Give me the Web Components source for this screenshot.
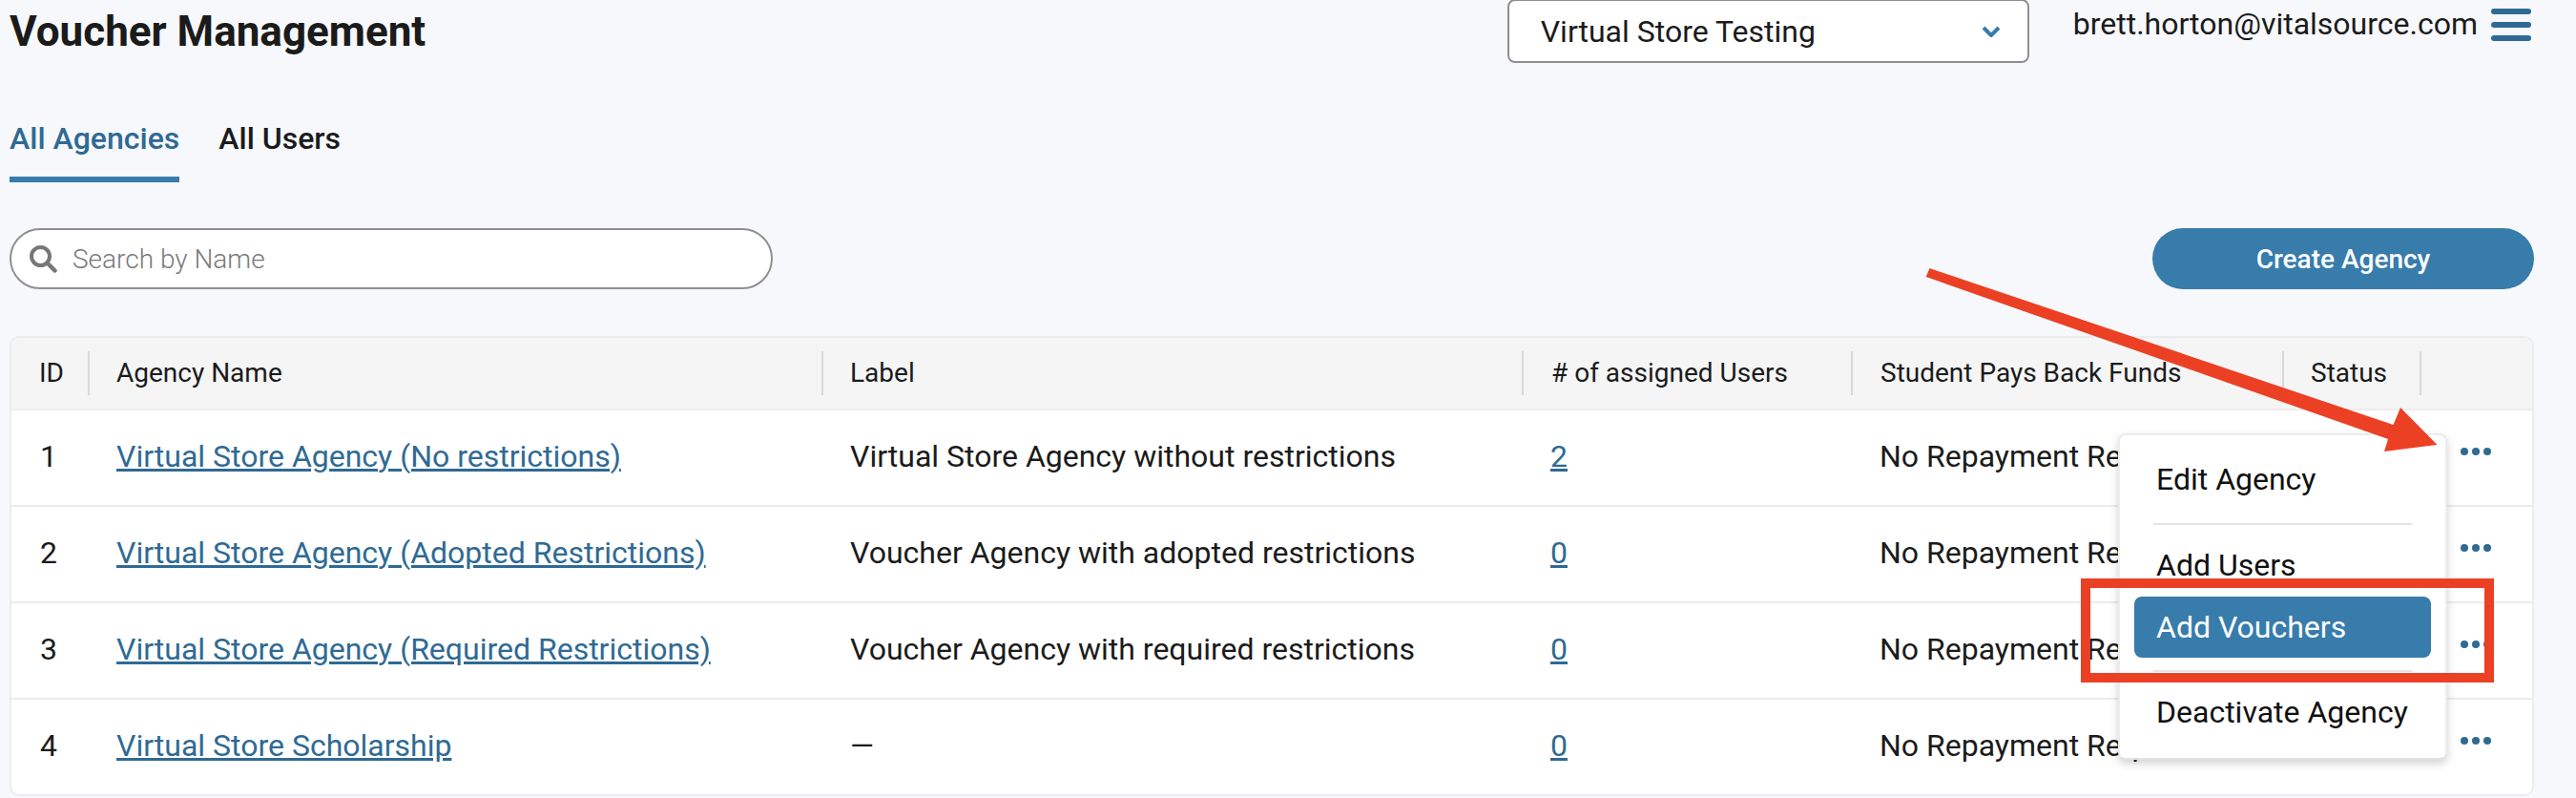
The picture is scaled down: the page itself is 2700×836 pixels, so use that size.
<!DOCTYPE html>
<html lang="en">
<head>
<meta charset="utf-8">
<title>Voucher Management</title>
<style>
    html, body { margin: 0; padding: 0; height: 100%; overflow: hidden; }
    body { background: #f7f8fc; color: #1b1b1b; font-family: Roboto, "Liberation Sans", sans-serif; }
</style>
</head>
<body>
<voucher-page>
    <page-header slot="header" heading="Voucher Management" store="Virtual Store Testing" email="brett.horton@vitalsource.com"></page-header>
    <tab-bar slot="tabs"></tab-bar>
    <tool-bar slot="tools"></tool-bar>
    <agency-table slot="table">
        <agency-row num="1" name="Virtual Store Agency (No restrictions)" label="Virtual Store Agency without restrictions" users="2"></agency-row>
        <agency-row num="2" name="Virtual Store Agency (Adopted Restrictions)" label="Voucher Agency with adopted restrictions" users="0"></agency-row>
        <agency-row num="3" name="Virtual Store Agency (Required Restrictions)" label="Voucher Agency with required restrictions" users="0"></agency-row>
        <agency-row num="4" name="Virtual Store Scholarship" label="—" users="0"></agency-row>
    </agency-table>
    <action-menu slot="overlay"></action-menu>
    <red-callout slot="overlay"></red-callout>
</voucher-page>

<script>
// page shell
class VoucherPage extends HTMLElement {
    constructor() {
        super();
        this.attachShadow({mode: 'open'});
        this.shadowRoot.innerHTML = `
            <style>
                :host { display: block; position: relative; width: 2700px; height: 836px; overflow: hidden; }
                .main { padding: 0 44px 0 10px; display: flex; flex-direction: column; }
            </style>
            <div class="main">
                <slot name="header"></slot>
                <slot name="tabs"></slot>
                <slot name="tools"></slot>
                <slot name="table"></slot>
            </div>
            <slot name="overlay"></slot>
        `;
    }
}
customElements.define('voucher-page', VoucherPage);

class PageHeader extends HTMLElement {
    constructor() {
        super();
        this.attachShadow({mode: 'open'});
    }
    connectedCallback() {
        const heading = this.getAttribute('heading');
        const store = this.getAttribute('store');
        const email = this.getAttribute('email');
        this.shadowRoot.innerHTML = `
            <style>
                :host { display: flex; align-items: flex-start; height: 66px; padding-right: 3px; }
                h1 { margin: 0; font-size: 44px; line-height: 66px; font-weight: 700; color: #1b1b1b; flex: 1; }
                .select {
                    box-sizing: border-box; width: 547px; height: 67px; margin-top: -1px; margin-right: 46px;
                    background: #fff; border: 2px solid #8f8f8f; border-radius: 8px;
                    display: flex; align-items: center; justify-content: space-between;
                    padding: 0 28px 0 33px; font-size: 32px; color: #1b1b1b;
                }
                .user { display: flex; gap: 14px; align-items: flex-start; }
                .email { font-size: 32px; line-height: 50px; color: #1b1b1b; }
                .burger { width: 42px; padding-top: 9px; display: flex; flex-direction: column; gap: 8px; }
                .burger i { display: block; height: 6px; background: #2f6a94; border-radius: 3px; }
            </style>
            <h1>${heading}</h1>
            <div class="select">
                <span>${store}</span>
                <svg width="20" height="12" viewBox="0 0 20 12"><path d="M2 2l8 8 8-8" fill="none" stroke="#387cab" stroke-width="4"/></svg>
            </div>
            <div class="user">
                <span class="email">${email}</span>
                <div class="burger"><i></i><i></i><i></i></div>
            </div>
        `;
    }
}
customElements.define('page-header', PageHeader);

class TabBar extends HTMLElement {
    constructor() {
        super();
        this.attachShadow({mode: 'open'});
        this.shadowRoot.innerHTML = `
            <style>
                :host { display: flex; gap: 41px; margin-top: 48px; height: 77px; font-size: 32px; font-weight: 500; }
                div { padding-top: 7px; height: 64px; line-height: 48px; white-space: nowrap; }
                .on { color: #2f6a94; border-bottom: 6px solid #387cab; }
            </style>
            <div class="on">All Agencies</div>
            <div>All Users</div>
        `;
    }
}
customElements.define('tab-bar', TabBar);

class ToolBar extends HTMLElement {
    constructor() {
        super();
        this.attachShadow({mode: 'open'});
        this.shadowRoot.innerHTML = `
            <style>
                :host { display: flex; justify-content: space-between; margin-top: 48px; height: 64px; }
                .search {
                    box-sizing: border-box; width: 800px; border: 2px solid #8f8f8f; border-radius: 32px; background: #fff;
                    display: flex; align-items: center; gap: 16px; padding-left: 18px;
                    font-size: 28px; color: #7a7a7a; font-weight: 300;
                }
                .btn {
                    width: 400px; border-radius: 32px; background: #387cab; color: #fff;
                    display: flex; align-items: center; justify-content: center;
                    font-size: 28px; font-weight: 500;
                }
            </style>
            <div class="search">
                <svg width="30" height="30" viewBox="0 0 30 30"><circle cx="12.5" cy="12.5" r="9.5" fill="none" stroke="#777" stroke-width="4"/><path d="M19.5 19.5l8 8" stroke="#777" stroke-width="4.5" stroke-linecap="round"/></svg>
                <span>Search by Name</span>
            </div>
            <div class="btn">Create Agency</div>
        `;
    }
}
customElements.define('tool-bar', ToolBar);

const COLS = '80px 769px 734px 345px 452px 144px 1fr';

class AgencyTable extends HTMLElement {
    constructor() {
        super();
        this.attachShadow({mode: 'open'});
        this.shadowRoot.innerHTML = `
            <style>
                :host { display: block; margin-top: 49px; background: #fff; border: 2px solid #ececec; border-radius: 10px; overflow: hidden; box-sizing: border-box; width: 2646px; }
                .head { display: grid; grid-template-columns: ${COLS}; height: 74px; align-items: center; background: #f5f5f5; font-size: 28px; color: #1b1b1b; }
                .head div { height: 46px; line-height: 46px; padding-left: 28px; border-left: 2px solid #d9d9d9; box-sizing: border-box; white-space: nowrap; }
                .head div:first-child { border-left: 0; padding-left: 29px; }
                .head div:nth-child(n+4):nth-child(-n+5) { padding-left: 29px; }
            </style>
            <div class="head">
                <div>ID</div><div>Agency Name</div><div>Label</div><div># of assigned Users</div><div>Student Pays Back Funds</div><div>Status</div><div></div>
            </div>
            <slot></slot>
        `;
    }
}
customElements.define('agency-table', AgencyTable);

class AgencyRow extends HTMLElement {
    constructor() {
        super();
        this.attachShadow({mode: 'open'});
    }
    connectedCallback() {
        this.shadowRoot.innerHTML = `
            <style>
                :host { display: grid; grid-template-columns: ${COLS}; height: 101px; box-sizing: border-box; border-top: 2px solid #ececec; padding-bottom: 4px; align-items: center; font-size: 32px; color: #1b1b1b; white-space: nowrap; }
                div { padding-left: 30px; min-width: 0; }
                div:first-child { padding-left: 29px; }
                a { color: #2f6a94; text-decoration: underline; }
                .dots { grid-column: 7; display: flex; gap: 4px; padding-left: 43px; margin-bottom: 10px; }
                .dots i { width: 8px; height: 8px; border-radius: 50%; background: #2f6a94; }
            </style>
            <div>${this.getAttribute('num')}</div>
            <div><a>${this.getAttribute('name')}</a></div>
            <div>${this.getAttribute('label')}</div>
            <div><a>${this.getAttribute('users')}</a></div>
            <div>No Repayment Required</div>
            <div></div>
            <div class="dots"><i></i><i></i><i></i></div>
        `;
    }
}
customElements.define('agency-row', AgencyRow);

// popup over the table
class ActionMenu extends HTMLElement {
    constructor() {
        super();
        this.attachShadow({mode: 'open'});
        this.shadowRoot.innerHTML = `
            <style>
                :host { position: absolute; left: 2220px; top: 454px; width: 345px; height: 342px; box-sizing: border-box; background: #fff; border-radius: 8px; border: 2px solid #ececec; border-bottom-color: #e2e2e2; box-shadow: 0 4px 10px rgba(0,0,0,.18); font-size: 32px; color: #111; display: flex; flex-direction: column; }
                .item { height: 64px; line-height: 64px; margin: 0 15px; padding-left: 23px; border-radius: 8px; flex: none; }
                hr { border: 0; height: 2px; background: #e4e4e4; margin: 0 35px; flex: none; }
                .active { background: #387cab; color: #fff; }
            </style>
            <div class="item" style="margin-top:14px">Edit Agency</div>
            <hr style="margin-top:14px">
            <div class="item" style="margin-top:10px">Add Users</div>
            <div class="item active" style="margin-top:1px">Add Vouchers</div>
            <hr style="margin-top:13px">
            <div class="item" style="margin-top:10px">Deactivate Agency</div>
        `;
    }
}
customElements.define('action-menu', ActionMenu);

// arrow and box drawn on top of the screenshot
class RedCallout extends HTMLElement {
    constructor() {
        super();
        this.attachShadow({mode: 'open'});
        this.shadowRoot.innerHTML = `
            <style>
                :host { position: absolute; inset: 0; pointer-events: none; }
                svg { position: absolute; left: 0; top: 0; }
            </style>
            <svg width="2700" height="836" viewBox="0 0 2700 836">
                <polygon fill="#ec4025" points="2022.5,281 2018.7,290 2503,460 2499,473 2554.5,466 2516,427 2508.5,445"/>
                <rect x="2186" y="611" width="423" height="99" fill="none" stroke="#ec4025" stroke-width="10"/>
            </svg>
        `;
    }
}
customElements.define('red-callout', RedCallout);
</script>
</body>
</html>
